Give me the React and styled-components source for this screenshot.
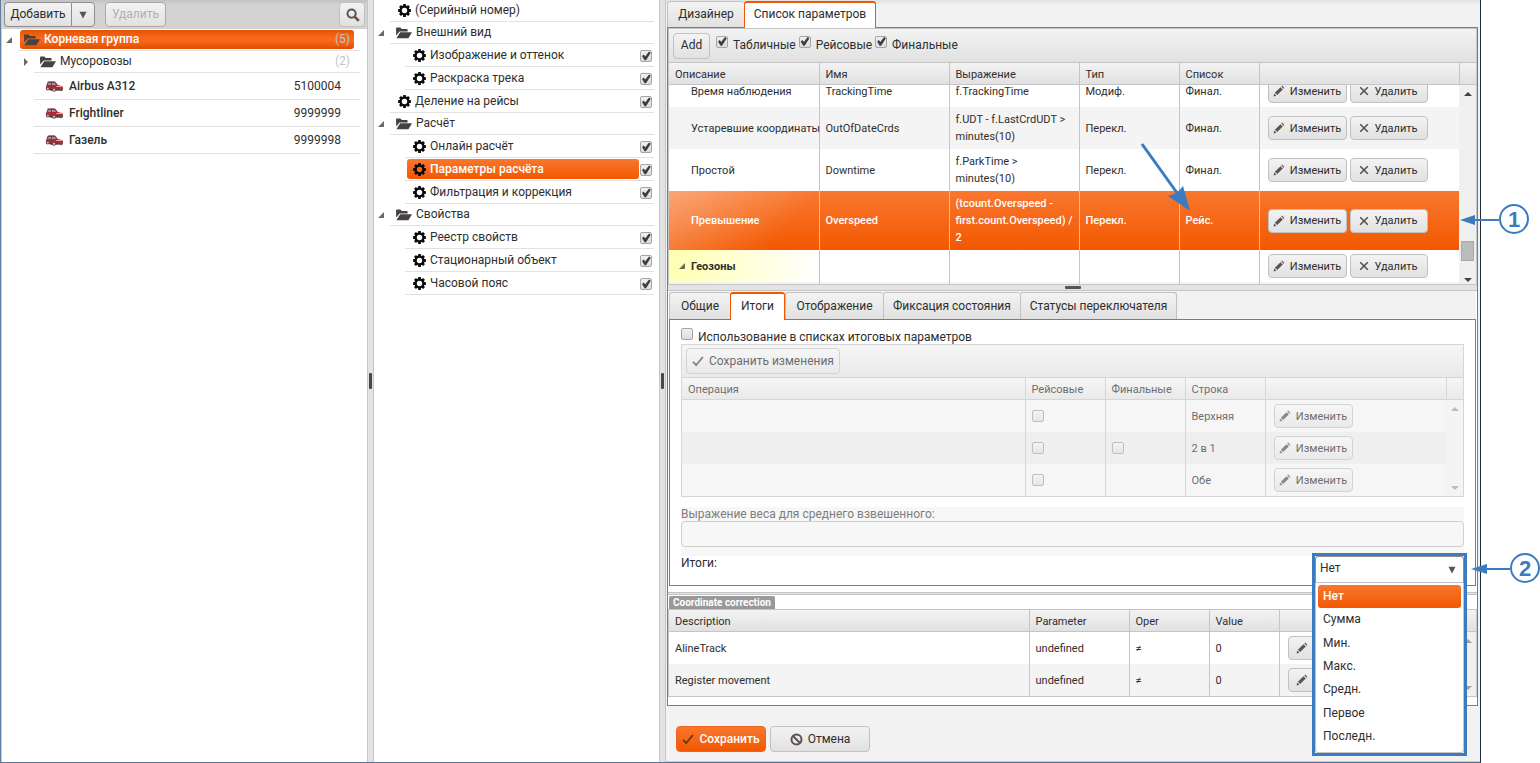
import React, { useState } from "react";
import styled, { createGlobalStyle, css } from "styled-components";

const GlobalStyle = createGlobalStyle`
  * {
    box-sizing: border-box;
  }
  body {
    margin: 0;
    background: #fff;
    color: #2e2e2e;
    font: 12px/17px Roboto, "Open Sans", sans-serif;
  }
  button, input, select {
    font: inherit;
    color: inherit;
    margin: 0;
  }
  ul {
    list-style: none;
    margin: 0;
    padding: 0;
  }
`;

const orange = "linear-gradient(#f8772f, #f35800)";
const silver = "linear-gradient(#f3f3f3, #e1e1e1)";

/* ---------- page frame ---------- */

const Page = styled.div`
  position: relative;
  min-height: 100vh;
  padding-right: 59px;
  display: flex;
  overflow: hidden;
`;

const Window = styled.div`
  flex: 1;
  min-width: 0;
  display: flex;
  border: solid #1d2a3a;
  border-width: 0 1px 1px;
  border-left-color: #5f7fa3;
  border-bottom-color: #5a7594;
`;

const Pane = styled.div`
  width: ${(props) => props.width};
  flex: none;
  background: #fff;
`;

const VehiclePane = styled(Pane)`
  border-left: 1px solid #ccc;
`;

const SettingsPane = styled(Pane)``;

const Splitter = styled.div`
  width: 7px;
  flex: none;
  background: #e3e3e3;
  border: solid #c5c5c5;
  border-width: 0 1px;
  display: flex;
  align-items: center;
  justify-content: center;

  &::after {
    content: "";
    width: 3px;
    height: 16px;
    border-radius: 1px;
    background: #4d4745;
  }
`;

const MainPane = styled.main`
  flex: 1;
  min-width: 0;
  padding: 0 2px 0 1px;
  background: linear-gradient(#e2e2e2, #f2f2f2 5px);
  border-bottom: 1px solid #ccc;
`;

/* ---------- buttons and inputs ---------- */

const Button = styled.button`
  height: ${(props) => (props.$small ? 24 : 26)}px;
  width: ${(props) => props.$width};
  flex: none;
  padding: 0;
  border: 1px solid #c1c1c1;
  border-radius: 4px;
  background: ${silver};
  display: inline-flex;
  align-items: center;
  justify-content: center;
  gap: 5px;
  white-space: nowrap;
  font-size: ${(props) => (props.$small ? 11 : 12)}px;

  &:disabled {
    color: #b0b0b0;
  }

  ${(props) =>
    props.$primary &&
    css`
      background: ${orange};
      border-color: #f0641a;
      color: #fff;
      font-weight: 500;
    `}
`;

const IconButton = styled(Button)`
  justify-content: flex-start;
  padding-left: 7px;
`;

const DarkButton = styled(Button)`
  border-color: #8e8e8e;
  height: 25px;
  &:disabled {
    border-color: #aaa;
  }
`;

const SplitButton = styled.div`
  display: flex;
  ${DarkButton}:first-child {
    border-radius: 4px 0 0 4px;
    border-right: 0;
  }
  ${DarkButton}:last-child {
    border-radius: 0 4px 4px 0;
  }
`;

const Checkbox = styled.input.attrs({ type: "checkbox" })`
  appearance: none;
  flex: none;
  display: block;
  position: relative;
  width: 12px;
  height: 12px;
  border: 1px solid #a5a5a5;
  border-radius: 2px;
  background: linear-gradient(#f0f0f0, #dcdcdc);

  &:checked::after {
    content: "";
    position: absolute;
    inset: 0;
    background: #3d3d3d;
    clip-path: polygon(10% 50%, 28% 36%, 42% 55%, 80% 5%, 98% 18%, 50% 92%, 36% 92%);
  }
`;

const CheckLabel = styled.label`
  display: flex;
  align-items: flex-start;
  gap: 5px;
  line-height: 19px;
`;

const TextInput = styled.input`
  display: block;
  width: 100%;
  height: 26px;
  padding: 0 6px;
  border: 1px solid #d0d0d0;
  border-radius: 4px;
  background: #f7f7f7;
`;

/* ---------- icons ---------- */

const Svg = styled.svg`
  flex: none;
  display: block;
`;

const FolderIcon = () => (
  <Svg width="16" height="12" viewBox="0 0 16 12" fill="#474240">
    <path d="M0 1.4 Q0 .4 1 .4 H4.4 L5.8 2 H10.8 Q11.6 2 11.6 2.9 V4.4 H3.6 L.2 8.6Z" />
    <path d="M4.2 5.2 H16 L12.4 11.2 H.4Z" />
  </Svg>
);

const GearIcon = () => (
  <Svg width="13" height="13" viewBox="0 0 13 13">
    <circle cx="6.5" cy="6.5" r="3.9" fill="none" stroke="#0b0b0b" strokeWidth="2.4" />
    {[0, 45, 90, 135, 180, 225, 270, 315].map((a) => (
      <rect key={a} x="5.1" y="0.1" width="2.8" height="2.6" rx="0.5" fill="#0b0b0b" transform={`rotate(${a} 6.5 6.5)`} />
    ))}
  </Svg>
);

const CarIcon = () => (
  <Svg width="19" height="11" viewBox="0 0 19 11">
    <path d="M1 5.4 L2.4 1.6 Q3 .6 4.4 .6 H9.2 Q10.2 .6 11 1.6 L12.8 4 L17 5 Q18.2 5.6 18 7.4 L17.6 9 L6 9.4 L1 7.6Z" fill="#b0282f" />
    <path d="M2.6 3.8 L3.6 1.5 H6 V4Z M7 1.5 H9.2 L11.2 4.1 H7Z" fill="#9d9698" />
    <path d="M2.6 1.2 H9.6" stroke="#4a4142" strokeWidth="1" />
    <path d="M11 4.9 H16.6 L17 6.1 H11.6Z" fill="#f0a8ab" />
    <path d="M.8 6.6 L7 8 L17.6 8 L17 9.6 L7 9.8 L1.2 8.2Z" fill="#5b3a3c" />
    <circle cx="2.8" cy="7.6" r="1.9" fill="#5a5556" />
    <circle cx="9" cy="8.7" r="2" fill="#5a5556" />
    <circle cx="9" cy="8.7" r="1" fill="#c8c8c8" />
    <circle cx="2.8" cy="7.6" r=".9" fill="#c8c8c8" />
    <circle cx="16.2" cy="8.6" r="1.6" fill="#5a5556" />
  </Svg>
);

const PencilIcon = () => (
  <Svg width="12" height="12" viewBox="0 0 12 12" fill="#5c534f">
    <path d="M.6 11.4 L1.2 8.6 L3.4 10.8Z" />
    <path d="M1.9 7.8 L7.5 2.2 L9.8 4.5 L4.2 10.1Z" />
    <path d="M8.3 1.4 L9.1 .6 L11.4 2.9 L10.6 3.7Z" />
  </Svg>
);

const CrossIcon = () => (
  <Svg width="10" height="10" viewBox="0 0 10 10" stroke="#5c534f" strokeWidth="1.6">
    <path d="M1.2 1.2 L8.8 8.8 M8.8 1.2 L1.2 8.8" />
  </Svg>
);

const CheckIcon = ({ color }) => (
  <Svg width="12" height="11" viewBox="0 0 12 11" fill="none" stroke={color} strokeWidth="1.9">
    <path d="M1 5.8 L4.2 9 L10.9 1" />
  </Svg>
);

const BanIcon = () => (
  <Svg width="13" height="13" viewBox="0 0 13 13" fill="none" stroke="#5c534f" strokeWidth="2">
    <circle cx="6.5" cy="6.5" r="5" />
    <path d="M3 3 L10 10" />
  </Svg>
);

const SearchIcon = () => (
  <Svg width="14" height="14" viewBox="0 0 14 14" fill="none" stroke="#5c534f">
    <circle cx="5.6" cy="5.6" r="4.1" strokeWidth="2" />
    <path d="M8.8 8.8 L12.8 12.8" strokeWidth="2.6" />
  </Svg>
);

const DownIcon = () => (
  <Svg width="8" height="8" viewBox="0 0 8 8" fill="#5c534f">
    <path d="M.4 .8 H7.6 L4 7.6Z" />
  </Svg>
);

const ExpandedIcon = () => (
  <Svg width="6" height="6" viewBox="0 0 6 6" fill="#6f6762">
    <path d="M6 0 V6 H0Z" />
  </Svg>
);

const CollapsedIcon = () => (
  <Svg width="6" height="8" viewBox="0 0 6 8" fill="#6f6762">
    <path d="M1 0 L5 4 L1 8Z" />
  </Svg>
);

/* ---------- trees ---------- */

const VehicleToolbar = styled.div`
  display: flex;
  gap: 10px;
  height: 29px;
  padding: 2px 2px 0;
  background: linear-gradient(#c2c2c2, #d3d3d3 5px);
`;

const SearchButton = styled(Button)`
  margin-left: auto;
  height: 25px;
  padding-left: 2px;
`;

const TreeRow = styled.li`
  display: flex;
  height: ${(props) => props.$height}px;
  padding-right: ${(props) => props.$right || 5}px;
`;

const Arrow = styled.span`
  width: ${(props) => props.$width}px;
  flex: none;
  display: flex;
  align-items: center;
  padding-left: ${(props) => props.$left}px;
`;

const TreeItem = styled.div`
  flex: 1;
  display: flex;
  align-items: center;
  border-bottom: 1px solid #e1e1e1;
`;

const VehicleGroup = styled.div`
  flex: 1;
  display: flex;
  align-items: center;
  gap: 4px;
  height: 19px;
  margin: 0 6px 0 2px;
  padding: 0 4px;
  border-radius: 3px;

  ${(props) =>
    props.$selected &&
    css`
      color: #fff;
      font-weight: 500;
      background: linear-gradient(#e55300, #f6681b 40%, #f6681b 60%, #e04c00);
    `}
`;

const Count = styled.span`
  margin-left: auto;
  color: #c4c4c4;
  font-weight: 400;
`;

const Vehicle = styled.div`
  flex: 1;
  display: flex;
  align-items: center;
  gap: 5px;
  padding: 0 19px 0 11px;
  font-weight: 500;
`;

const Phone = styled.span`
  margin-left: auto;
  font-weight: 400;
`;

const SettingLabel = styled.div`
  flex: 1;
  display: flex;
  align-items: center;
  gap: 4px;
  height: 20px;
  margin-left: 2px;
  padding-left: ${(props) => (props.$folder ? 4 : 6)}px;
  border-radius: 3px;

  ${(props) =>
    props.$selected &&
    css`
      color: #fff;
      font-weight: 500;
      background: ${orange};
    `}
`;

const RowCheck = styled(Checkbox)`
  margin: 2px 2px 0 1px;
`;

const vehicles = [
  { name: "Airbus A312", phone: "5100004" },
  { name: "Frightliner", phone: "9999999" },
  { name: "Газель", phone: "9999998" },
];

const settings = [
  { text: "(Серийный номер)" },
  { text: "Внешний вид", folder: true },
  { text: "Изображение и оттенок", nested: true, check: true },
  { text: "Раскраска трека", nested: true, check: true },
  { text: "Деление на рейсы", check: true },
  { text: "Расчёт", folder: true },
  { text: "Онлайн расчёт", nested: true, check: true },
  { text: "Параметры расчёта", nested: true, check: true, selected: true },
  { text: "Фильтрация и коррекция", nested: true, check: true },
  { text: "Свойства", folder: true },
  { text: "Реестр свойств", nested: true, check: true },
  { text: "Стационарный объект", nested: true, check: true },
  { text: "Часовой пояс", nested: true, check: true },
];

function VehicleTree() {
  return (
    <VehiclePane width="366px">
      <VehicleToolbar>
        <SplitButton>
          <DarkButton $width="67px">Добавить</DarkButton>
          <DarkButton $width="24px" aria-label="Ещё">
            <DownIcon />
          </DarkButton>
        </SplitButton>
        <DarkButton $width="61px" disabled>
          Удалить
        </DarkButton>
        <SearchButton $width="26px" aria-label="Поиск">
          <SearchIcon />
        </SearchButton>
      </VehicleToolbar>
      <ul>
        <TreeRow $height={22} $right={7}>
          <Arrow $width={16} $left={4}>
            <ExpandedIcon />
          </Arrow>
          <TreeItem>
            <VehicleGroup $selected>
              <FolderIcon />
              Корневая группа
              <Count>(5)</Count>
            </VehicleGroup>
          </TreeItem>
        </TreeRow>
        <TreeRow $height={22} $right={7}>
          <Arrow $width={32} $left={21}>
            <CollapsedIcon />
          </Arrow>
          <TreeItem>
            <VehicleGroup>
              <FolderIcon />
              Мусоровозы
              <Count>(2)</Count>
            </VehicleGroup>
          </TreeItem>
        </TreeRow>
        {vehicles.map((v) => (
          <TreeRow key={v.name} $height={27} $right={7}>
            <Arrow $width={32} />
            <TreeItem>
              <Vehicle>
                <CarIcon />
                {v.name}
                <Phone>{v.phone}</Phone>
              </Vehicle>
            </TreeItem>
          </TreeRow>
        ))}
      </ul>
    </VehiclePane>
  );
}

function SettingsTree() {
  return (
    <SettingsPane width="285px">
      <ul>
        {settings.map((s, i) => (
          <TreeRow key={s.text} $height={s.folder || i === 0 ? 22 : 23}>
            <Arrow $width={s.nested ? 31 : 16} $left={4}>
              {s.folder && <ExpandedIcon />}
            </Arrow>
            <TreeItem>
              <SettingLabel $folder={s.folder} $selected={s.selected}>
                {s.folder ? <FolderIcon /> : <GearIcon />}
                {s.text}
              </SettingLabel>
              {s.check && <RowCheck defaultChecked aria-label={s.text} />}
            </TreeItem>
          </TreeRow>
        ))}
      </ul>
    </SettingsPane>
  );
}

/* ---------- tabs ---------- */

const Tabs = styled.div`
  display: flex;
  height: 27px;
  margin-top: 1px;
`;

const Tab = styled.button`
  position: relative;
  height: ${(props) => (props.$active ? 27 : 26)}px;
  width: ${(props) => props.$width}px;
  padding: 0;
  white-space: nowrap;
  border: 1px solid #c1c1c1;
  border-right-width: 0;
  border-bottom: 0;
  border-radius: 3px 3px 0 0;
  background: ${silver};

  &:last-child {
    border-right-width: 1px;
  }

  ${(props) =>
    props.$active &&
    css`
      padding-bottom: 2px;
      border: solid #f35800;
      border-width: 2px 1px 0;
      background: #fff;
    `}
`;

const TabPanel = styled.div`
  border: 1px solid #f35800;
  margin-top: -1px;
  background: #fff;
`;

const InnerTabs = styled.div`
  margin: 0 1px;
`;

const InnerTabStrip = styled(Tabs)`
  margin-top: 0;
  height: 29px;
  align-items: flex-end;
  background: #f2f2f2;
`;

const InnerTab = styled(Tab)`
  height: ${(props) => (props.$active ? 28 : 27)}px;
  margin-bottom: ${(props) => (props.$active ? 0 : 1)}px;
`;

const ResizeBar = styled.div`
  height: ${(props) => props.$height}px;
  background: #e3e3e3;
  border-bottom: 1px solid #c5c5c5;
  border-top: ${(props) => (props.$plain ? "1px solid #c5c5c5" : "0")};
  display: flex;
  align-items: center;
  justify-content: center;

  &::after {
    content: "";
    display: ${(props) => (props.$plain ? "none" : "block")};
    width: 16px;
    height: 3px;
    border-radius: 1px;
    background: #5c534f;
  }
`;

const BottomBar = styled(ResizeBar)`
  margin-top: 6px;
`;

/* ---------- grids ---------- */

const GridBox = styled.div`
  border: 1px solid #c5c5c5;
  opacity: ${(props) => (props.$disabled ? 0.7 : 1)};
  background: ${(props) => (props.$disabled ? "#f3f3f3" : "#fff")};
`;

const GridToolbar = styled.div`
  height: ${(props) => props.$height}px;
  display: flex;
  align-items: center;
  gap: 3px;
  padding: 0 4px;
  background: ${silver};
  border-bottom: 1px solid #c5c5c5;
`;

const FilterLabel = styled(CheckLabel)`
  height: 20px;
  margin-left: 3px;
  & + & {
    margin-left: 0;
  }
`;

const GridHead = styled.div`
  display: flex;
  height: 22px;
  background: ${silver};
  border-bottom: 1px solid #c5c5c5;

  &::after {
    content: "";
    width: 16px;
    flex: none;
    border-left: 1px solid #c5c5c5;
  }
`;

const Table = styled.table`
  flex: 1;
  min-width: 0;
  width: 100%;
  table-layout: fixed;
  border-collapse: collapse;
  font-size: 11px;
  line-height: 17px;
`;

const Th = styled.th`
  height: 21px;
  padding: 2px 6px 0;
  text-align: left;
  font-weight: 400;
  & + & {
    border-left: 1px solid #c5c5c5;
  }
`;

const Tr = styled.tr`
  background: ${(props) => (props.$alt ? (props.$dim ? "#e9e9e9" : "#f4f4f4") : "transparent")};

  ${(props) =>
    props.$selected &&
    css`
      color: #fff;
      font-weight: 500;
      background: ${orange};
    `}
`;

const Td = styled.td`
  height: 32px;
  padding: 4px 2px 4px 6px;
  & + & {
    border-left: 1px solid #c5c5c5;
  }
`;

const NameTd = styled(Td)`
  padding-left: 22px;
  padding-right: 0;
  white-space: nowrap;
  background: ${(props) =>
    props.$selected ? "linear-gradient(135deg, rgba(255,255,255,.35), rgba(255,255,255,0) 75%)" : "none"};
`;

const GroupTd = styled(Td)`
  padding-left: 10px;
  background: linear-gradient(90deg, #ffffb0, #fff);
`;

const GroupTitle = styled.div`
  display: flex;
  align-items: center;
  gap: 6px;
  font-weight: 700;
`;

const ActionTd = styled(Td)`
  padding: 4px 8px;
`;

const Actions = styled.div`
  display: flex;
  gap: 3px;
  font-weight: 400;
  color: #2e2e2e;
`;

const GridBody = styled.div`
  display: flex;
  align-items: flex-start;
  overflow: hidden;
  height: ${(props) => props.$height};
`;

const ScrolledTable = styled(Table)`
  margin-top: -10px;
`;

const ScrollBar = styled.div`
  width: 17px;
  flex: none;
  align-self: stretch;
  background: #f0f0f0;
  display: flex;
  flex-direction: column;
  align-items: center;
  padding: 7px 0 ${(props) => (props.$dim ? 6 : 2)}px;
`;

const ScrollArrow = styled.span`
  border: 4px solid transparent;
  border-top-width: ${(props) => (props.$down ? 4 : 0)}px;
  border-bottom-width: ${(props) => (props.$down ? 0 : 4)}px;
  border-top-color: ${(props) => (props.$dim ? "#a0a0a0" : "#404040")};
  border-bottom-color: ${(props) => (props.$dim ? "#a0a0a0" : "#404040")};
`;

const Track = styled.div`
  flex: 1;
  width: 13px;
  display: flex;
  flex-direction: column;
  justify-content: flex-end;
  padding-bottom: 17px;
`;

const Thumb = styled.div`
  height: 20px;
  background: #bcbcbc;
  border: 1px solid #a8a8a8;
`;

function Scroll({ dim }) {
  return (
    <ScrollBar $dim={dim}>
      <ScrollArrow $dim={dim} />
      <Track>{!dim && <Thumb />}</Track>
      <ScrollArrow $down $dim={dim} />
    </ScrollBar>
  );
}

function Cols({ widths }) {
  return (
    <colgroup>
      {widths.map((w, i) => (
        <col key={i} width={w} />
      ))}
    </colgroup>
  );
}

function Head({ widths, titles }) {
  return (
    <GridHead>
      <Table>
        <Cols widths={widths} />
        <thead>
          <tr>
            {titles.map((t, i) => (
              <Th key={i}>{t}</Th>
            ))}
          </tr>
        </thead>
      </Table>
    </GridHead>
  );
}

function EditButton({ disabled }) {
  return (
    <Button $small $width="79px" tabIndex={disabled ? -1 : 0}>
      <PencilIcon />
      Изменить
    </Button>
  );
}

function DeleteButton() {
  return (
    <Button $small $width="78px">
      <CrossIcon />
      Удалить
    </Button>
  );
}

const params = [
  ["Время наблюдения", "TrackingTime", "f.TrackingTime", "Модиф.", "Финал."],
  ["Устаревшие координаты", "OutOfDateCrds", "f.UDT - f.LastCrdUDT > minutes(10)", "Перекл.", "Финал."],
  ["Простой", "Downtime", "f.ParkTime > minutes(10)", "Перекл.", "Финал."],
  ["Превышение", "Overspeed", "(tcount.Overspeed - first.count.Overspeed) / 2", "Перекл.", "Рейс."],
];

const paramCols = [150, 130, 130, 100, 80, undefined];

function ParamGrid() {
  return (
    <GridBox>
      <GridToolbar $height={34}>
        <Button $width="37px">Add</Button>
        {["Табличные", "Рейсовые", "Финальные"].map((t) => (
          <FilterLabel key={t}>
            <Checkbox defaultChecked />
            {t}
          </FilterLabel>
        ))}
      </GridToolbar>
      <Head widths={paramCols} titles={["Описание", "Имя", "Выражение", "Тип", "Список", ""]} />
      <GridBody $height="199px">
        <ScrolledTable>
          <Cols widths={paramCols} />
          <tbody>
            {params.map(([title, ...rest], i) => {
              const selected = title === "Превышение";
              return (
                <Tr key={title} $alt={i % 2 === 1} $selected={selected}>
                  <NameTd $selected={selected}>{title}</NameTd>
                  {rest.map((text, j) => (
                    <Td key={j}>{text}</Td>
                  ))}
                  <ActionTd>
                    <Actions>
                      <EditButton />
                      <DeleteButton />
                    </Actions>
                  </ActionTd>
                </Tr>
              );
            })}
            <Tr>
              <GroupTd>
                <GroupTitle>
                  <ExpandedIcon />
                  Геозоны
                </GroupTitle>
              </GroupTd>
              <Td />
              <Td />
              <Td />
              <Td />
              <ActionTd>
                <Actions>
                  <EditButton />
                  <DeleteButton />
                </Actions>
              </ActionTd>
            </Tr>
            <Tr $alt>
              <Td />
              <Td />
              <Td />
              <Td />
              <Td />
              <Td />
            </Tr>
          </tbody>
        </ScrolledTable>
        <Scroll />
      </GridBody>
    </GridBox>
  );
}

/* ---------- totals tab ---------- */

const TotalsPanel = styled(TabPanel)`
  padding: 8px 11px 0;
  height: 267px;
`;

const UseLabel = styled(CheckLabel)`
  height: 16px;
`;

const WeightField = styled.div`
  margin-top: 10px;
  padding-bottom: 9px;
  background: #f7f7f7;
  color: #7d7d7d;

  label {
    display: block;
    height: 14px;
    line-height: 14px;
  }
`;

const TotalsRow = styled.div`
  position: relative;
  display: flex;
  justify-content: space-between;
  line-height: 15px;
`;

const Dropdown = styled.div`
  position: absolute;
  right: -3px;
  top: -3px;
  width: 155px;
  z-index: 2;
  border: 3px solid #3b7bc0;
  background: #fff;
`;

const SelectBox = styled.div`
  display: flex;
  align-items: center;
  position: relative;
  border: 1px solid #8e8e8e;
  border-bottom-color: #c5c5c5;
  border-radius: 3px 3px 0 0;
  height: 27px;

  ${Svg} {
    position: absolute;
    right: 7px;
    pointer-events: none;
  }
`;

const Select = styled.select`
  appearance: none;
  width: 100%;
  height: 25px;
  padding: 0 4px 2px;
  border: 0;
  background: transparent;
`;

const Options = styled.ul`
  display: flex;
  flex-direction: column;
  height: 170px;
  padding: 2px 2px 4px;
  border: 1px solid #c5c5c5;
  border-top: 0;
  border-radius: 0 0 3px 3px;
`;

const Option = styled.li`
  flex: 1;
  display: flex;
  align-items: center;
  padding: 0 5px;
  border-radius: 3px;

  &[aria-selected="true"] {
    color: #fff;
    font-weight: 500;
    background: ${orange};
  }
`;

const totalCols = [343, 80, 80, 80, undefined];
const totalKinds = ["Нет", "Сумма", "Мин.", "Макс.", "Средн.", "Первое", "Последн."];
const lines = [
  { line: "Верхняя" },
  { line: "2 в 1", final: true },
  { line: "Обе" },
];

function Totals() {
  const [kind, setKind] = useState("Нет");
  return (
    <TotalsPanel>
      <UseLabel>
        <Checkbox />
        Использование в списках итоговых параметров
      </UseLabel>
      <GridBox $disabled>
        <GridToolbar $height={33}>
          <Button $width="154px">
            <CheckIcon color="#5c534f" />
            Сохранить изменения
          </Button>
        </GridToolbar>
        <Head widths={totalCols} titles={["Операция", "Рейсовые", "Финальные", "Строка", ""]} />
        <GridBody>
          <Table>
            <Cols widths={totalCols} />
            <tbody>
              {lines.map((l, i) => (
                <Tr key={l.line} $alt={i % 2 === 1} $dim>
                  <Td />
                  <Td>
                    <Checkbox aria-label="Рейсовые" />
                  </Td>
                  <Td>{l.final && <Checkbox aria-label="Финальные" />}</Td>
                  <Td>{l.line}</Td>
                  <ActionTd>
                    <Actions>
                      <EditButton disabled />
                    </Actions>
                  </ActionTd>
                </Tr>
              ))}
            </tbody>
          </Table>
          <Scroll dim />
        </GridBody>
      </GridBox>
      <WeightField>
        <label htmlFor="weight">Выражение веса для среднего взвешенного:</label>
        <TextInput id="weight" disabled />
      </WeightField>
      <TotalsRow>
        <label htmlFor="kind">Итоги:</label>
        <Dropdown>
          <SelectBox>
            <Select id="kind" value={kind} onChange={(e) => setKind(e.target.value)}>
              {totalKinds.map((k) => (
                <option key={k}>{k}</option>
              ))}
            </Select>
            <DownIcon />
          </SelectBox>
          <Options role="listbox" aria-label="Итоги">
            {totalKinds.map((k) => (
              <Option key={k} role="option" aria-selected={k === kind} onClick={() => setKind(k)}>
                {k}
              </Option>
            ))}
          </Options>
        </Dropdown>
      </TotalsRow>
    </TotalsPanel>
  );
}

/* ---------- coordinate correction ---------- */

const Caption = styled.h2`
  width: fit-content;
  height: 13px;
  margin: 1px 0 0 1px;
  padding: 0 4px;
  border-radius: 2px 2px 0 0;
  background: #999;
  color: #fff;
  font-size: 10px;
  line-height: 13px;
  font-weight: 700;
`;

const Correction = styled.section`
  padding-bottom: 8px;
`;

const correctionCols = [360, 100, 80, 70, undefined];

function CoordinateCorrection() {
  return (
    <Correction>
      <Caption>Coordinate correction</Caption>
      <GridBox>
        <Head widths={correctionCols} titles={["Description", "Parameter", "Oper", "Value", ""]} />
        <GridBody>
          <Table>
            <Cols widths={correctionCols} />
            <tbody>
              {["AlineTrack", "Register movement"].map((t, i) => (
                <Tr key={t} $alt={i === 1}>
                  <Td>{t}</Td>
                  <Td>undefined</Td>
                  <Td>≠</Td>
                  <Td>0</Td>
                  <ActionTd>
                    <Actions>
                      <IconButton $small $width="79px" aria-label="Edit">
                        <PencilIcon />
                      </IconButton>
                    </Actions>
                  </ActionTd>
                </Tr>
              ))}
            </tbody>
          </Table>
          <Scroll dim />
        </GridBody>
      </GridBox>
    </Correction>
  );
}

const Footer = styled.footer`
  display: flex;
  gap: 4px;
  padding: 20px 9px 9px;
`;

/* ---------- callouts ---------- */

const Callouts = styled.svg`
  position: absolute;
  top: 0;
  right: 0;
  pointer-events: none;
  z-index: 3;
  font: 700 22px "Liberation Sans", sans-serif;
`;

function Marks() {
  return (
    <Callouts width="410" height="600" viewBox="0 0 410 600" fill="#3b7bc0">
      <g stroke="#3b7bc0" fill="none">
        <path d="M12 144 L50 197" strokeWidth="3" />
        <path d="M341 220 H369" strokeWidth="2" />
        <path d="M354 569 H380" strokeWidth="2" />
        <circle cx="384" cy="219" r="14" strokeWidth="2" fill="#fff" />
        <circle cx="395" cy="568" r="14" strokeWidth="2" fill="#fff" />
      </g>
      <path d="M60 211 L38 196 L47 193 L53 186Z" />
      <path d="M330 220 L345 215 V225Z" />
      <path d="M341 569 L357 564 V574Z" />
      <text x="384" y="227" textAnchor="middle">
        1
      </text>
      <text x="395" y="576" textAnchor="middle">
        2
      </text>
    </Callouts>
  );
}

function App() {
  return (
    <>
      <GlobalStyle />
      <Page>
        <Window>
          <VehicleTree />
          <Splitter />
          <SettingsTree />
          <Splitter />
          <MainPane>
            <Tabs>
              <Tab $width={77}>Дизайнер</Tab>
              <Tab $width={132} $active>
                Список параметров
              </Tab>
            </Tabs>
            <TabPanel>
              <ParamGrid />
              <ResizeBar $height={6} />
              <InnerTabs>
                <InnerTabStrip>
                  <InnerTab $width={61}>Общие</InnerTab>
                  <InnerTab $width={55} $active>
                    Итоги
                  </InnerTab>
                  <InnerTab $width={98}>Отображение</InnerTab>
                  <InnerTab $width={137}>Фиксация состояния</InnerTab>
                  <InnerTab $width={157}>Статусы переключателя</InnerTab>
                </InnerTabStrip>
                <Totals />
              </InnerTabs>
              <BottomBar $height={3} $plain />
              <CoordinateCorrection />
            </TabPanel>
            <Footer>
              <Button $primary $width="90px">
                <CheckIcon color="#6b3a1c" />
                Сохранить
              </Button>
              <Button $width="100px">
                <BanIcon />
                Отмена
              </Button>
            </Footer>
          </MainPane>
        </Window>
        <Marks />
      </Page>
    </>
  );
}

export default App;
